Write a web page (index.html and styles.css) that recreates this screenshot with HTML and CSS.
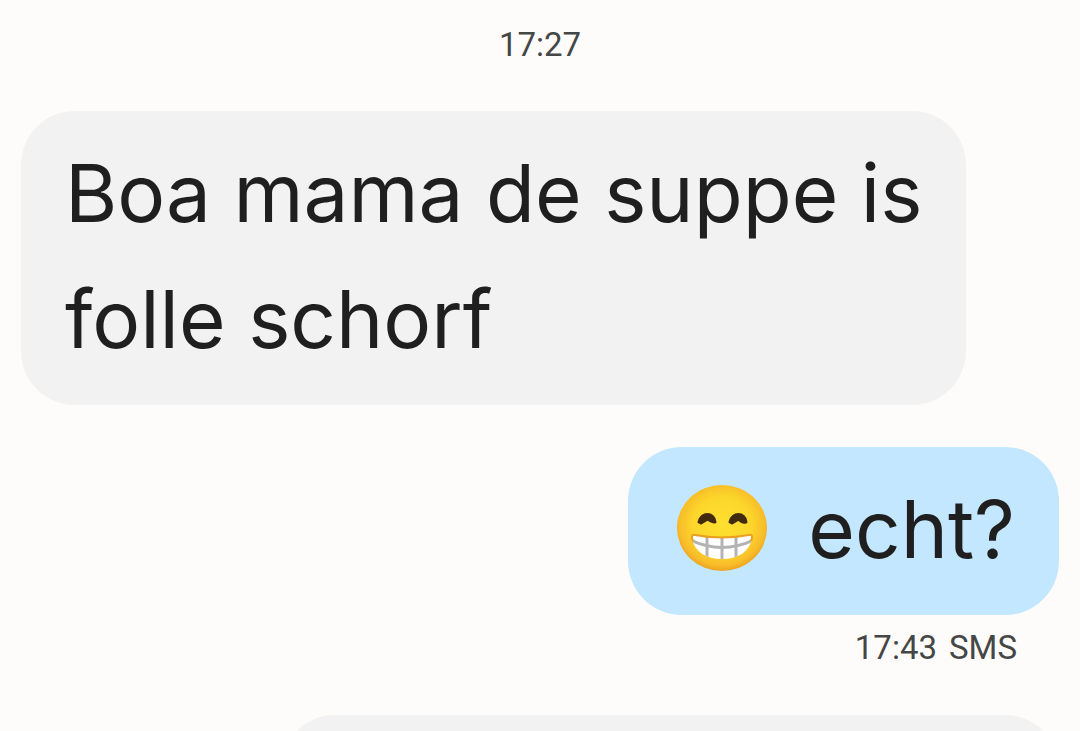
FILE: index.html
```html
<!DOCTYPE html>
<html lang="nl">
<head>
<meta charset="utf-8">
<meta name="viewport" content="width=device-width, initial-scale=1">
<title>Messages</title>
<link rel="stylesheet" href="styles.css">
</head>
<body>
<main class="thread">
  <time class="stamp">17:27</time>
  <p class="bubble received">Boa mama de suppe is folle schorf</p>
  <div class="outgoing">
    <p class="bubble sent">
      <svg class="emoji" viewBox="0 0 92 90" role="img" aria-label="Grinning face">
        <defs>
          <radialGradient id="face" cx="50%" cy="46%" r="54%">
            <stop offset="0" stop-color="#fde030"/>
            <stop offset=".6" stop-color="#fcd62b"/>
            <stop offset=".88" stop-color="#f8bd29"/>
            <stop offset="1" stop-color="#eda322"/>
          </radialGradient>
          <clipPath id="mouth">
            <path d="M19 51Q46 56 73 51Q77 50 76 55C73 68 62 75 46 75S19 68 16 55Q15 50 19 51Z"/>
          </clipPath>
        </defs>
        <ellipse cx="46" cy="44" rx="45" ry="43" fill="url(#face)"/>
        <path d="M23 38C25 28 38 28 39 38Q35 38 32 35Q28 37 25 39ZM54 38C56 28 69 28 70 38Q66 39 63 35Q59 37 56 39Z" fill="#422b0d" stroke="#422b0d" stroke-width="3" stroke-linejoin="round"/>
        <g clip-path="url(#mouth)">
          <rect x="14" y="48" width="64" height="28" fill="#fff"/>
          <path d="M14 56Q46 71 78 56M31 49V76M46 49V76M60 49V76" fill="none" stroke="#b3b3b3" stroke-width="3"/>
        </g>
        <path d="M17 57Q14 50 19 51Q46 56 73 51Q78 50 75 57" fill="none" stroke="#eb9f20" stroke-width="2"/>
      </svg>
      <span>echt?</span>
    </p>
    <p class="status"><time>17:43</time> <span>SMS</span></p>
  </div>
  <p class="bubble next"></p>
</main>
</body>
</html>
```
FILE: styles.css
```css
* {
  box-sizing: border-box;
}

body {
  margin: 0;
  background: #fefcfa;
  color: #1f1f1f;
}

.thread {
  display: flex;
  flex-direction: column;
  height: 100vh;
  overflow: hidden;
  padding: 24px 21px 0;
}

.stamp,
.status {
  color: #444746;
  font-family: Roboto, sans-serif;
  font-size: 33px;
  line-height: 42px;
}

.stamp {
  align-self: center;
}

.bubble {
  flex-shrink: 0;
  margin: 0;
  padding: 19px 44px 23px;
  border-radius: 54px;
  background: #f2f2f2;
  font-family: Inter, sans-serif;
  font-size: 80px;
  line-height: 126px;
}

.received {
  align-self: flex-start;
  width: 945px;
  max-width: 100%;
  margin-top: 45px;
  padding-right: 32px;
}

.outgoing {
  display: flex;
  flex-direction: column;
  align-items: flex-end;
  margin-top: 42px;
}

.sent {
  display: flex;
  align-items: center;
  gap: 36px;
  background: #c2e7ff;
}

.emoji {
  width: 92px;
  height: 90px;
  margin: 0 4px;
}

.status {
  display: flex;
  gap: 12px;
  margin: 12px 42px 0 0;
}

.next {
  align-self: flex-end;
  width: 75%;
  min-height: 168px;
  margin-top: 46px;
}
```
